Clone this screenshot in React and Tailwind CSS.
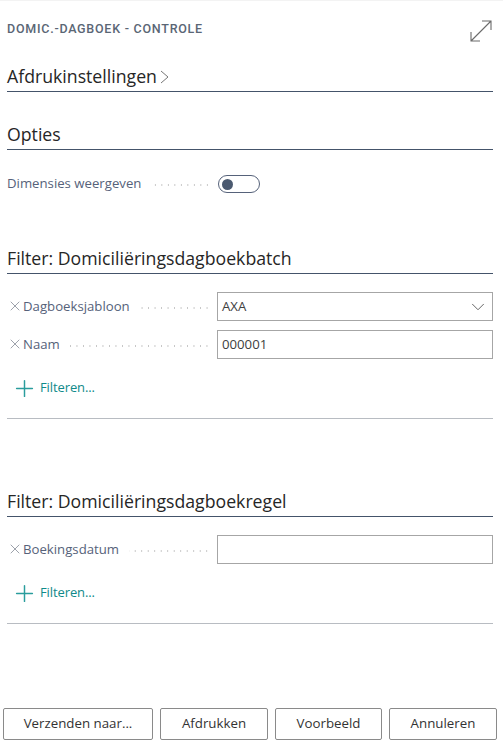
import { Plus, X, ChevronDown } from 'lucide-react';

const font = "font-['Open_Sans','Noto_Sans',sans-serif]";

function Heading({ children, className = '' }) {
  return (
    <div className={`h-[30px] border-b border-[#44546a] flex items-center text-[17.7px] font-medium text-[#262626] ${className}`}>
      {children}
    </div>
  );
}

function Dots() {
  return <div className="flex-1 ml-[10px] mr-[7px] mt-[3px] h-[2px] bg-[radial-gradient(circle,#c4c4c4_0.8px,transparent_1px)] bg-[length:6.5px_2px] bg-repeat-x bg-right" />;
}

function FilterRow({ label, value, select }) {
  return (
    <div className="flex items-center h-[29px]">
      <div className="w-[210px] flex items-center shrink-0">
        <X size={16} strokeWidth={1} className="text-[#6b7280] shrink-0" />
        <span className="text-[13.2px] text-[#56627a]">{label}</span>
        <Dots />
      </div>
      <div className="flex-1 h-[29px] border border-[#a6a6a6] flex items-center justify-between pl-[4px] pr-[3px] text-[13.2px] text-[#404040]">
        <span>{value}</span>
        {select && <ChevronDown size={22} strokeWidth={1} className="text-[#595959]" />}
      </div>
    </div>
  );
}

function AddFilter() {
  return (
    <div className="flex items-center h-[20px] pl-[4px] text-[13px] tracking-[-0.1px] text-[#0f8a8a]">
      <Plus size={27} strokeWidth={1.3} className="text-[#2a9d9d] mr-[2px]" />
      Filteren...
    </div>
  );
}

function Btn({ children, className = '' }) {
  return (
    <button className={`h-[32px] border border-[#8a8a8a] rounded-[2px] bg-white text-[13.3px] text-[#333] ${className}`}>
      {children}
    </button>
  );
}

export default function App() {
  return (
    <div className={`${font} w-[503px] h-[750px] bg-white overflow-hidden flex flex-col`}>
      <div className="h-[1px] bg-[#f3f3f3]" />
      <div className="px-[7px] flex-1 w-[500px]">
        <div className="relative h-[47px] flex items-center pt-[9px]">
          <span className="font-['Roboto',sans-serif] font-medium text-[12.5px] tracking-[0.75px] text-[#5a6675]">DOMIC.-DAGBOEK - CONTROLE</span>
          <svg width="24" height="24" viewBox="0 0 24 24" fill="none" stroke="#6b6b6b" strokeWidth="1.1" className="absolute right-0 top-[18px]">
            <path d="M2 22 L22 2 M13 2 H22 V11 M2 13 V22 H11" />
          </svg>
        </div>
        <Heading className="mt-[14px]">
          Afdrukinstellingen
          <svg width="10" height="14" viewBox="0 0 10 14" fill="none" stroke="#777777" strokeWidth="1" className="ml-[3px] mt-[1px]">
            <path d="M1 1 L8 7 L1 13" />
          </svg>
        </Heading>
        <Heading className="mt-[28px]">Opties</Heading>
        <div className="flex items-center h-[20px] mt-[24px]">
          <div className="w-[211px] flex items-center">
            <span className="text-[13.2px] text-[#56627a]">Dimensies weergeven</span>
            <Dots />
          </div>
          <div className="w-[42px] h-[18px] rounded-full border border-[#56627a] flex items-center pl-[3px]">
            <div className="w-[11px] h-[11px] rounded-full bg-[#4b5a70]" />
          </div>
        </div>
        <Heading className="mt-[50px]">Filter: Domiciliëringsdagboekbatch</Heading>
        <div className="mt-[18px] flex flex-col gap-[9px]">
          <FilterRow label="Dagboeksjabloon" value="AXA" select />
          <FilterRow label="Naam" value="000001" />
        </div>
        <div className="mt-[19px]"><AddFilter /></div>
        <div className="mt-[20px] border-b border-[#b8bcc2]" />
        <Heading className="mt-[68px]">Filter: Domiciliëringsdagboekregel</Heading>
        <div className="mt-[18px]"><FilterRow label="Boekingsdatum" value="" /></div>
        <div className="mt-[19px]"><AddFilter /></div>
        <div className="mt-[20px] border-b border-[#b8bcc2]" />
      </div>
      <div className="flex gap-[7px] pl-[3px] pb-[10px]">
        <Btn className="w-[150px]">Verzenden naar...</Btn>
        <Btn className="w-[108px]">Afdrukken</Btn>
        <Btn className="w-[107px]">Voorbeeld</Btn>
        <Btn className="w-[108px]">Annuleren</Btn>
      </div>
    </div>
  );
}
